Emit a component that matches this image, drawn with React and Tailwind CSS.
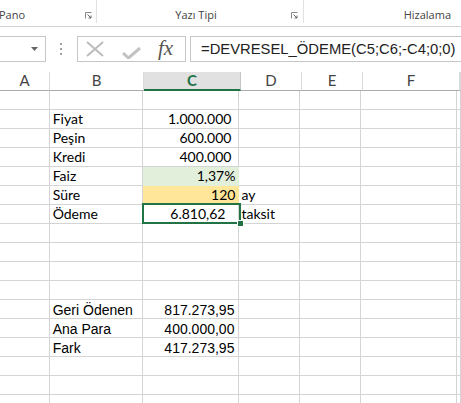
import React from 'react';

const colW = ['w-[50px]', 'w-[94px]', 'w-[97px]', 'w-[61px]', 'w-[61px]', 'w-[97px]', 'flex-1'];
const letters = ['A', 'B', 'C', 'D', 'E', 'F', ''];

const calibri = { fontFamily: 'Lato, "Open Sans", sans-serif' };
const arial = { fontFamily: '"Liberation Sans", Arial, sans-serif' };

// rows 1..17, only filled cells listed
const data = {
  2: { b: 'Fiyat', c: '1.000.000', pr: 'pr-[7px]' },
  3: { b: 'Peşin', c: '600.000', pr: 'pr-[7px]' },
  4: { b: 'Kredi', c: '400.000', pr: 'pr-[7px]' },
  5: { b: 'Faiz', c: '1,37%', pr: 'pr-[3px]', fill: 'bg-[#e2efda] border-[#e2efda]' },
  6: { b: 'Süre', c: '120', pr: 'pr-[3px]', fill: 'bg-[#ffe699] border-[#ffe699]', d: 'ay' },
  7: { b: 'Ödeme', c: '6.810,62', pr: 'pr-[13px]', d: 'taksit', selected: true },
  12: { b: 'Geri Ödenen', c: '817.273,95', pr: 'pr-[4px]', arial: true },
  13: { b: 'Ana Para', c: '400.000,00', pr: 'pr-[4px]', arial: true },
  14: { b: 'Fark', c: '417.273,95', pr: 'pr-[4px]', arial: true },
};

const Ribbon = () => (
  <div className="h-[27px] border-b border-[#d4d4d4] flex text-[11px] text-[#444]" style={{ fontFamily: '"Open Sans", sans-serif' }}>
    <div className="w-[97px] border-r border-[#e1e1e1] mb-[3px] flex items-end justify-between pb-[1px] pr-[4px]">
      <span className="-ml-[1px] leading-[14px]">Pano</span>
      <Launcher />
    </div>
    <div className="w-[207px] border-r border-[#e1e1e1] mb-[3px] flex items-end pb-[1px] pr-[5px]">
      <span className="flex-1 text-center leading-[14px] pl-[4px]">Yazı Tipi</span>
      <Launcher />
    </div>
    <div className="flex-1 flex items-end justify-end pb-[4px] pr-[10px]">
      <span className="leading-[14px]">Hizalama</span>
    </div>
  </div>
);

const Launcher = () => (
  <svg width="7" height="7" viewBox="0 0 7 7" className="mb-[3px]">
    <path d="M0.5 6.5V0.5H6.5" fill="none" stroke="#888" strokeWidth="1" />
    <path d="M2.5 2.5L6 6M6 3.5V6H3.5" fill="none" stroke="#666" strokeWidth="1" />
  </svg>
);

const FormulaBar = () => (
  <div className="h-[45px] flex items-start pt-[9px]">
    <div className="w-[46px] h-[26px] border border-l-0 border-[#c6c6c6] flex items-center justify-end pr-[7px]">
      <svg width="7" height="4" viewBox="0 0 7 4">
        <path d="M0 0H7L3.5 4Z" fill="#666" />
      </svg>
    </div>
    <div className="w-[31px] h-[26px] flex flex-col items-center justify-center gap-[3px] pr-[1px]">
      <span className="w-[2px] h-[2px] bg-[#a0a0a0]" />
      <span className="w-[2px] h-[2px] bg-[#a0a0a0]" />
      <span className="w-[2px] h-[2px] bg-[#a0a0a0]" />
    </div>
    <div className="w-[109px] h-[26px] border border-[#c6c6c6] flex items-center">
      <svg width="18" height="16" viewBox="0 0 18 16" className="ml-[8px]">
        <path d="M1 1L17 15M17 1L1 15" stroke="#bcbcbc" strokeWidth="2" />
      </svg>
      <svg width="19" height="12" viewBox="0 0 19 12" className="ml-[18px] mt-[7px]">
        <path d="M1 6L6.5 11L18 1" fill="none" stroke="#c2c2c2" strokeWidth="3" />
      </svg>
      <span
        className="ml-[17px] italic text-[21px] leading-none text-[#555] -mt-[2px]"
        style={{ fontFamily: '"Liberation Serif", "DejaVu Serif", serif' }}
      >
        fx
      </span>
    </div>
    <div
      className="flex-1 h-[26px] ml-[4px] border border-r-0 border-[#c6c6c6] flex items-center pl-[10px] text-[14.8px] text-[#222] whitespace-nowrap overflow-hidden"
      style={arial}
    >
      =DEVRESEL_ÖDEME(C5;C6;-C4;0;0)
    </div>
  </div>
);

const Header = () => (
  <div className="flex h-[19px]" style={calibri}>
    {colW.map((w, i) =>
      i === 2 ? (
        <div key={i} className={`${w} bg-[#e1e1e1] border-r border-[#c6c6c6] border-b-2 border-b-[#217346] flex items-center justify-center text-[15px] font-bold text-[#217346] leading-none`}>
          C
        </div>
      ) : (
        <div key={i} className={`${w} border-r border-[#d9d9d9] border-b border-b-[#ababab] flex items-center justify-center text-[15px] text-[#444] leading-none pb-[1px]`}>
          {letters[i]}
        </div>
      )
    )}
  </div>
);

const Row = ({ n }) => {
  const r = data[n] || {};
  const font = r.arial ? arial : calibri;
  const size = r.arial ? 'text-[14px] pt-[2px]' : 'text-[14px]';
  return (
    <div className="flex h-[19px] text-black" style={font}>
      {colW.map((w, i) => {
        let content = null;
        let extra = 'border-[#d4d4d4]';
        let align = 'justify-start pl-[3px]';
        if (i === 1) content = r.b;
        if (i === 2) {
          content = r.c;
          align = `justify-end ${r.pr || ''}`;
          if (r.fill) extra = r.fill;
        }
        if (i === 3) {
          content = r.d;
          align = 'justify-start pl-[2px]';
        }
        return (
          <div key={i} className={`${w} relative border-r border-b ${extra} flex items-center ${align} ${size} leading-[18px] whitespace-nowrap`}>
            {content}
            {i === 2 && r.selected && (
              <div className="absolute -left-[1px] -top-[2px] w-[99px] h-[21px] border-2 border-[#217346] z-10">
                <span className="absolute -right-[5px] -bottom-[5px] w-[7px] h-[7px] bg-[#217346] border border-white" />
              </div>
            )}
          </div>
        );
      })}
    </div>
  );
};

export default function App() {
  const rows = Array.from({ length: 17 }, (_, i) => i + 1);
  return (
    <div className="w-[461px] h-[403px] overflow-hidden bg-white">
      <Ribbon />
      <FormulaBar />
      <Header />
      {rows.map((n) => (
        <Row key={n} n={n} />
      ))}
    </div>
  );
}
